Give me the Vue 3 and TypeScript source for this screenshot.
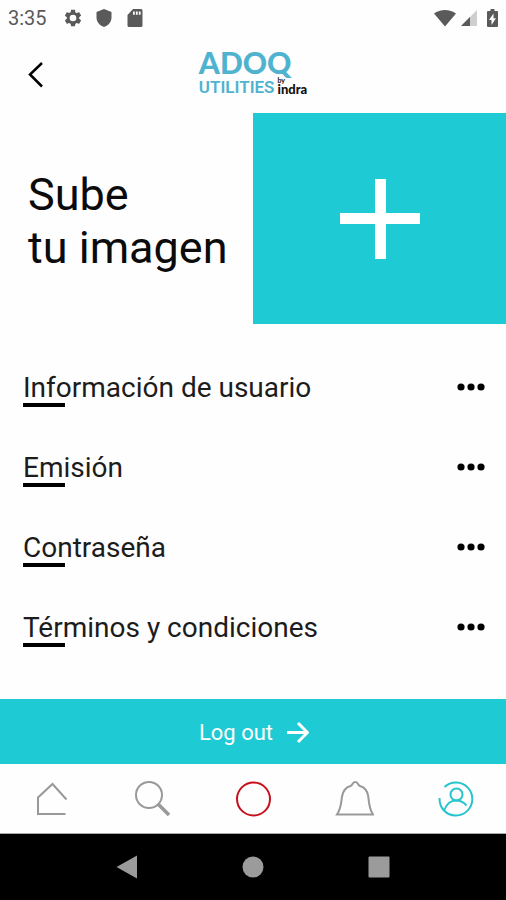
<script setup lang="ts">
interface MenuEntry {
  id: string
  label: string
}

const entries: MenuEntry[] = [
  { id: 'usuario', label: 'Información de usuario' },
  { id: 'emision', label: 'Emisión' },
  { id: 'contrasena', label: 'Contraseña' },
  { id: 'terminos', label: 'Términos y condiciones' },
]
</script>

<template>
  <div class="screen">
    <div class="status">
      <div class="status-group">
        <span class="clock">3:35</span>
        <svg class="gear" width="20" height="20" viewBox="0 0 24 24" aria-hidden="true">
          <path fill-rule="evenodd" d="M19.4 13c0-.3.1-.6.1-1s0-.7-.1-1l2.100-1.600c.2-.2.2-.4.1-.6l-2-3.500c-.1-.2-.4-.3-.6-.2l-2.500 1c-.5-.4-1.100-.7-1.700-1l-.4-2.600c0-.3-.2-.5-.4-.5h-4c-.2 0-.4.2-.4.4l-.4 2.700c-.6.2-1.200.6-1.700 1l-2.500-1c-.2-.1-.5 0-.6.2l-2 3.500c-.1.2-.1.4.1.6L4.600 11c0 .3-.1.7-.1 1s0 .7.1 1l-2.100 1.600c-.2.2-.2.4-.1.6l2 3.500c.1.2.4.3.6.2l2.500-1c.5.4 1.100.7 1.700 1l.4 2.600c0 .3.2.5.4.5h4c.2 0 .4-.2.4-.4l.4-2.700c.6-.2 1.200-.6 1.700-1l2.500 1c.2.1.5 0 .6-.2l2-3.500c.1-.2.1-.4-.1-.6L19.400 13ZM12 16a4 4 0 1 1 0-8 4 4 0 0 1 0 8Z" />
        </svg>
        <svg width="20" height="20" viewBox="0 0 20 20" aria-hidden="true">
          <path d="M10 1 17.500 4v5.500c0 4.300-3 7.800-7.500 9.500-4.500-1.700-7.500-5.200-7.500-9.500V4Z" />
        </svg>
        <svg width="20" height="20" viewBox="0 0 20 20" aria-hidden="true">
          <path fill-rule="evenodd" d="M8 1h8a1.500 1.500 0 0 1 1.500 1.500v15A1.500 1.500 0 0 1 16 19H4a1.500 1.500 0 0 1-1.500-1.500V7ZM8 3.500v3.200h1.800V3.500ZM10.900 3.500v3.200h1.800V3.500ZM13.800 3.500v3.200h1.800V3.500Z" />
        </svg>
      </div>
      <div class="status-group right">
        <svg width="22" height="18" viewBox="0 0 22 18" aria-hidden="true">
          <path d="M0 4.500C6 -.3 16-.3 22 4.500L11 17.500Z" />
        </svg>
        <svg width="17" height="18" viewBox="0 0 17 18" aria-hidden="true">
          <path class="faint" d="M17 1v16H1Z" />
          <path d="M10 8v9H1Z" />
        </svg>
        <svg class="battery" width="11" height="18" viewBox="0 0 11 18" aria-hidden="true">
          <path fill-rule="evenodd" d="M3.500 0h4v2H10a1 1 0 0 1 1 1v14a1 1 0 0 1-1 1H1a1 1 0 0 1-1-1V3a1 1 0 0 1 1-1h2.500ZM6.500 4.500 2 11h2.500v5L9 9.300H6.500Z" />
        </svg>
      </div>
    </div>

    <header class="header">
      <button class="back" type="button" aria-label="Volver">
        <svg width="16" height="26" viewBox="0 0 16 26" aria-hidden="true">
          <path d="M14 1 2 12.500 14 24.500" />
        </svg>
      </button>
      <div class="logo">
        <span class="logo-top">ADOQ</span>
        <span class="logo-bottom">
          <span class="logo-name">UTILITIES</span>
          <span class="logo-brand">
            <span class="logo-by">by</span>
            <span class="logo-indra">indra</span>
          </span>
        </span>
      </div>
    </header>

    <main>
      <section class="hero">
        <h1 class="hero-title">Sube<br />tu imagen</h1>
        <button class="upload" type="button" aria-label="Añadir imagen">
          <svg width="80" height="80" viewBox="0 0 80 80" aria-hidden="true">
            <path d="M35 0h11v34h34v11H46v35H35V45H0V34h35Z" />
          </svg>
        </button>
      </section>

      <ul class="menu">
        <li v-for="entry in entries" :key="entry.id">
          <button class="entry" type="button">
            <span class="entry-label">{{ entry.label }}</span>
            <svg width="28" height="8" viewBox="0 0 28 8" aria-hidden="true">
              <circle cx="4" cy="4" r="3.600" />
              <circle cx="14" cy="4" r="3.600" />
              <circle cx="24" cy="4" r="3.600" />
            </svg>
          </button>
        </li>
      </ul>
    </main>

    <button class="logout" type="button">
      <span>Log out</span>
      <svg width="22" height="22" viewBox="0 0 22 22" aria-hidden="true">
        <path d="M0 10.500h20M11 1l9.500 9.500-9.500 9.500" />
      </svg>
    </button>

    <nav class="tabs">
      <a href="#inicio" aria-label="Inicio">
        <svg width="40" height="40" viewBox="0 0 40 40" aria-hidden="true">
          <path d="M35.500 20.500 21.500 5 7 18.500V35h27.500" />
        </svg>
      </a>
      <a href="#buscar" aria-label="Buscar">
        <svg width="40" height="40" viewBox="0 0 40 40" aria-hidden="true">
          <circle cx="17" cy="16" r="13" />
          <path class="handle" d="m26.500 25.500 10.500 10.500" />
        </svg>
      </a>
      <a class="record" href="#nuevo" aria-label="Nuevo">
        <svg width="40" height="40" viewBox="0 0 40 40" aria-hidden="true">
          <circle cx="20.500" cy="20" r="16.500" />
        </svg>
      </a>
      <a href="#avisos" aria-label="Avisos">
        <svg width="40" height="40" viewBox="0 0 40 40" aria-hidden="true">
          <path d="M3 35.500c4-6 4-11 5-18 .9-6 3.500-9 8.500-10.500 1-.4 1.500-1 2-2 1-2.700 4.500-2.700 5.500 0 .5 1 1 1.600 2 2 5 1.500 7.500 4.500 8.300 10.500.9 7 .7 12 4.700 18Z" />
        </svg>
      </a>
      <a class="profile" href="#perfil" aria-label="Perfil" aria-current="page">
        <svg width="40" height="40" viewBox="0 0 40 40" aria-hidden="true">
          <path d="M9.500 8A16.500 16.500 0 1 1 9 31.500C6 28.500 4.500 24.500 4.500 19" />
          <path d="M9 31.500C11.500 25 16 21.500 21 21.500c4.500 0 7.500 1.500 10.500 5" />
          <circle cx="21.500" cy="15.500" r="6" />
        </svg>
      </a>
    </nav>

    <div class="system">
      <button type="button" aria-label="Atrás">
        <svg width="22" height="24" viewBox="0 0 22 24" aria-hidden="true">
          <path d="M21 .5v23L.5 12Z" />
        </svg>
      </button>
      <button type="button" aria-label="Pantalla de inicio">
        <svg width="22" height="22" viewBox="0 0 22 22" aria-hidden="true">
          <circle cx="11" cy="11" r="10.500" />
        </svg>
      </button>
      <button type="button" aria-label="Recientes">
        <svg width="22" height="22" viewBox="0 0 22 22" aria-hidden="true">
          <rect x=".5" y=".5" width="21" height="21" rx="1" />
        </svg>
      </button>
    </div>
  </div>
</template>

<style>
body {
  margin: 0;
  background: #fefefe;
}
</style>

<style scoped>
.screen {
  display: flex;
  flex-direction: column;
  min-height: 100vh;
  background: #fefefe;
  color: #0b0b0b;
  font-family: Roboto, 'Liberation Sans', sans-serif;
}

button {
  padding: 0;
  border: 0;
  background: none;
  color: inherit;
  font: inherit;
  cursor: pointer;
}

svg {
  display: block;
  flex: none;
}

.status {
  display: flex;
  justify-content: space-between;
  align-items: center;
  height: 36px;
  padding: 0 8px;
  color: #5a5a5a;
  fill: #5a5a5a;
}

.status-group {
  display: flex;
  align-items: center;
  gap: 11px;
}

.status-group.right {
  gap: 4px;
}

.clock {
  font-size: 20px;
  line-height: 24px;
}

.gear {
  margin-left: 5px;
}

.faint {
  fill: #cfcfcf;
}

.battery {
  margin-left: 6px;
}

.header {
  display: grid;
  grid-template-columns: 1fr auto 1fr;
  height: 77px;
  padding: 0 28px;
}

.back {
  align-self: center;
  justify-self: start;
}

.back path {
  fill: none;
  stroke: #000;
  stroke-width: 2.500;
}

.logo {
  display: flex;
  flex-direction: column;
  padding-top: 10px;
  color: #4fb3cf;
  font-family: Lato, 'Open Sans', sans-serif;
  font-weight: 700;
}

.logo-top {
  font-size: 30px;
  font-weight: 900;
  line-height: 32px;
}

.logo-bottom {
  display: flex;
  align-items: flex-end;
  gap: 3px;
}

.logo-name {
  font-family: Roboto, sans-serif;
  font-size: 17px;
  font-weight: 600;
  line-height: 18px;
}

.logo-brand {
  display: flex;
  flex-direction: column;
  color: #111;
}

.logo-by {
  font-size: 7px;
  line-height: 5px;
}

.logo-indra {
  font-size: 13px;
  font-weight: 900;
  line-height: 13px;
}

.hero {
  display: grid;
  grid-template-columns: 1fr 1fr;
  height: 211px;
}

.hero-title {
  align-self: center;
  margin: 0;
  padding: 4px 0 0 28px;
  font-size: 45px;
  font-weight: 400;
  line-height: 53px;
  white-space: nowrap;
}

.upload {
  display: grid;
  place-items: center;
  background: #1ecad3;
  fill: #fff;
}

.menu {
  margin: 0;
  padding: 23px 21px 31px 23px;
  list-style: none;
}

.entry {
  display: flex;
  justify-content: space-between;
  align-items: center;
  width: 100%;
  height: 80px;
  color: #1c1c1c;
  fill: #000;
  text-align: left;
}

.entry-label {
  font-size: 28px;
  line-height: 36px;
}

.entry-label::after {
  content: '';
  display: block;
  width: 42px;
  height: 4px;
  margin: -3px 0;
  background: #000;
}

.logout {
  display: flex;
  justify-content: center;
  align-items: center;
  gap: 14px;
  height: 65px;
  margin-top: auto;
  padding: 2px 0 0 2px;
  background: #1ecad3;
  color: #fff;
  font-size: 22px;
  line-height: 28px;
}

.logout path {
  fill: none;
  stroke: #fff;
  stroke-width: 3;
}

.tabs {
  display: grid;
  grid-template-columns: repeat(5, 1fr);
  height: 69px;
  border-bottom: 1px solid #aaa;
}

.tabs a {
  display: grid;
  place-items: center;
  color: #999;
}

.tabs svg {
  fill: none;
  stroke: currentColor;
  stroke-width: 2;
}

.tabs .handle {
  stroke-width: 3.500;
}

.tabs .record {
  color: #c8101a;
}

.tabs .profile {
  color: #27c4cd;
}

.system {
  display: grid;
  grid-template-columns: repeat(3, 126px);
  justify-content: center;
  height: 66px;
  background: #000;
  fill: #9b9b9b;
}

.system button {
  display: grid;
  place-items: center;
}
</style>
